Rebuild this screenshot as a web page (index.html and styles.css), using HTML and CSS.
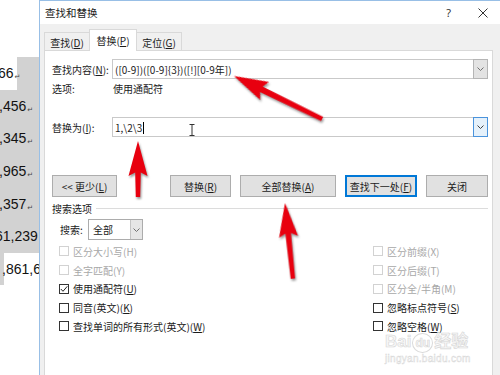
FILE: index.html
```html
<!DOCTYPE html>
<html lang="zh-CN">
<head>
  <meta charset="UTF-8">
  <title>查找和替换</title>
  <link rel="stylesheet" href="styles.css">
</head>
<body>
<div class="page">

  <!-- Word document peeking out behind the dialog -->
  <div class="sheet">
    <div class="row first"><span class="txt">66<i>↵</i></span></div>
    <div class="row gray"><span class="txt">,456<i>↵</i></span></div>
    <div class="row gray"><span class="txt">,345<i>↵</i></span></div>
    <div class="row gray"><span class="txt">,965<i>↵</i></span></div>
    <div class="row gray"><span class="txt">,357<i>↵</i></span></div>
    <div class="row gray"><span class="txt cut">61,239</span></div>
    <div class="row last"><span class="txt">,861,6</span></div>
  </div>

  <!-- Find & Replace dialog -->
  <div class="dialog">
    <div class="titlebar">
      <span class="title">查找和替换</span>
      <span class="help">?</span>
      <svg class="close" width="10" height="10" viewBox="0 0 10 10">
        <path d="M0.5,0.5 L9.5,9.5 M9.5,0.5 L0.5,9.5" stroke="#333" stroke-width="1"/>
      </svg>
    </div>

    <div class="dlg-body">
      <div class="tabs">
        <div class="tab t1">查找(<u>D</u>)</div>
        <div class="tab t2 active">替换(<u>P</u>)</div>
        <div class="tab t3">定位(<u>G</u>)</div>
      </div>

      <div class="panel">
        <div class="field">
          <label>查找内容(<u>N</u>):</label>
          <div class="combo">
            <span class="value">([0-9])([0-9]{3})([!][0-9年])</span>
            <span class="drop">
              <svg width="7" height="4" viewBox="0 0 7 4"><polyline points="0.5,0.5 3.5,3.5 6.5,0.5" fill="none" stroke="#707070"/></svg>
            </span>
          </div>
        </div>

        <div class="field opts">
          <label>选项:</label>
          <span class="opt-val">使用通配符</span>
        </div>

        <div class="field replace">
          <label>替换为(<u>I</u>):</label>
          <div class="combo">
            <span class="value">1,\2\3<span class="caret"></span></span>
            <span class="drop focus">
              <svg width="7" height="4" viewBox="0 0 7 4"><polyline points="0.5,0.5 3.5,3.5 6.5,0.5" fill="none" stroke="#404040"/></svg>
            </span>
          </div>
        </div>

        <div class="buttons">
          <div class="btn more">&lt;&lt; 更少(<u>L</u>)</div>
          <div class="btn w61">替换(<u>R</u>)</div>
          <div class="btn w96">全部替换(<u>A</u>)</div>
          <div class="btn w72 default">查找下一处(<u>F</u>)</div>
          <div class="btn w62">关闭</div>
        </div>

        <div class="group">搜索选项</div>

        <div class="search-row">
          <label>搜索:</label>
          <div class="select">
            <span class="value">全部</span>
            <span class="sel-drop">
              <svg width="7" height="4" viewBox="0 0 7 4"><polyline points="0.5,0.5 3.5,3.5 6.5,0.5" fill="none" stroke="#707070"/></svg>
            </span>
          </div>
        </div>

        <div class="checks">
          <div class="check off"><span class="box"></span>区分大小写(H)</div>
          <div class="check off"><span class="box"></span>全字匹配(Y)</div>
          <div class="check"><span class="box">
            <svg width="8" height="8" viewBox="0 0 8 8"><polyline points="0.8,4 3,6.3 7.3,1.3" fill="none" stroke="#222" stroke-width="1"/></svg>
          </span>使用通配符(<u>U</u>)</div>
          <div class="check"><span class="box"></span>同音(英文)(<u>K</u>)</div>
          <div class="check"><span class="box"></span>查找单词的所有形式(英文)(<u>W</u>)</div>

          <div class="check off"><span class="box"></span>区分前缀(X)</div>
          <div class="check off"><span class="box"></span>区分后缀(T)</div>
          <div class="check off"><span class="box"></span>区分全/半角(M)</div>
          <div class="check"><span class="box"></span>忽略标点符号(<u>S</u>)</div>
          <div class="check"><span class="box"></span>忽略空格(<u>W</u>)</div>
        </div>
      </div>
    </div>
  </div>

  <!-- watermark -->
  <div class="watermark">
    <div class="wm-logo">Bai<span class="paw">du</span>经验</div>
    <div class="wm-url">jingyan.baidu.com</div>
  </div>

  <!-- red annotation arrows + mouse cursor -->
  <svg class="arrows" width="500" height="375" viewBox="0 0 500 375">
    <g class="arrow">
      <polygon transform="translate(234,76) rotate(-64)" points="0,0 10,34 3,30.5 2.3,98 -2.3,98 -3,30.5 -10,34"/>
      <polygon transform="translate(138,141)" points="0,0 9.5,35 2.8,31.5 2.2,56 -2.2,56 -2.8,31.5 -9.5,35"/>
      <polygon transform="translate(285,203) rotate(-6)" points="0,0 9.5,34 2.8,30.5 2.2,76 -2.2,76 -2.8,30.5 -9.5,34"/>
    </g>
    <path class="ibeam" d="M189.5,124.5 H194.5 M189.5,135.5 H194.5 M192,125 V135"/>
  </svg>

</div>
</body>
</html>
```

FILE: styles.css
```css
* {
  box-sizing: border-box;
}
body {
  margin: 0;
  background: #fff;
  font-family: "Noto Sans CJK SC", "Noto Sans", sans-serif;
  font-size: 10px;
  color: #1b1b1b;
}
u {
  text-decoration: underline;
  text-underline-offset: 1px;
}
.page {
  position: relative;
  width: 500px;
  height: 375px;
  overflow: hidden;
  display: flex;
}

/* document behind */
.sheet {
  width: 39px;
  flex: none;
  padding-top: 57px;
  font-family: "Liberation Sans", Arial, sans-serif;
  font-size: 14px;
  color: #111;
}
.sheet .row {
  height: 32.6px;
  display: flex;
  align-items: center;
  white-space: nowrap;
  overflow: hidden;
}
.sheet .row.first {
  background: linear-gradient(90deg, #fff 17px, #d2d2d2 17px);
}
.sheet .row.gray {
  background: #d2d2d2;
}
.sheet .row.last {
  background: linear-gradient(90deg, #d2d2d2 4px, #fff 4px);
}
.sheet .txt {
  margin-left: -1px;
}
.sheet .row.first .txt {
  margin-left: -2px;
}
.sheet .txt.cut {
  margin-left: -5px;
}
.sheet .row.last .txt {
  margin-left: 2px;
}
.sheet i {
  font-style: normal;
  font-family: "DejaVu Sans", sans-serif;
  font-size: 7px;
  color: #444;
  margin-left: 1px;
  vertical-align: -1px;
}

/* dialog */
.dialog {
  flex: 1;
  display: flex;
  flex-direction: column;
  border-left: 1px solid #98bfe6;
  border-top: 1px solid #98bfe6;
  background: #f0f0f0;
}
.titlebar {
  height: 23px;
  flex: none;
  background: #fff;
  display: flex;
  align-items: center;
  padding: 0 12px 0 5px;
}
.title {
  flex: 1;
  font-size: 10.5px;
}
.help {
  font-family: "Noto Sans", sans-serif;
  font-size: 11px;
  color: #333;
  margin-right: 27px;
}
.dlg-body {
  flex: 1;
  display: flex;
  flex-direction: column;
  padding: 5px 7px 0 4px;
}
.tabs {
  height: 21px;
  display: flex;
  align-items: flex-end;
}
.tab {
  height: 18px;
  border: 1px solid #d9d9d9;
  border-bottom: none;
  background: #f0f0f0;
  display: flex;
  align-items: center;
  justify-content: center;
  padding-top: 1px;
}
.tab.t1 { width: 46px; }
.tab.t2 { width: 48px; margin-left: -1px; }
.tab.t3 { width: 46px; margin-left: -1px; }
.tab.active {
  height: 22px;
  margin-bottom: -1px;
  background: #fff;
  position: relative;
  z-index: 1;
  padding-top: 0;
}
.panel {
  flex: 1;
  background: #fff;
  border: 1px solid #d9d9d9;
  border-bottom: none;
  padding: 8px 4px 0 7px;
}

.field {
  display: flex;
  align-items: center;
  height: 20px;
}
.field label {
  width: 60px;
  flex: none;
}
.combo {
  flex: 1;
  height: 20px;
  border: 1px solid #c9c9c9;
  display: flex;
  align-items: center;
  padding-left: 2px;
}
.combo .value {
  flex: 1;
  white-space: nowrap;
  font-size: 10px;
}
.caret {
  display: inline-block;
  width: 1px;
  height: 12px;
  background: #000;
  margin-left: 1px;
  vertical-align: -2px;
}
.drop {
  width: 15px;
  align-self: stretch;
  margin: -1px -1px -1px 0;
  border: 1px solid #b5b5b5;
  background: #e3e3e3;
  display: flex;
  align-items: center;
  justify-content: center;
}
.drop.focus {
  border-color: #4a93dc;
  background: #e5f1fb;
}
.field.opts {
  height: 16px;
  margin-top: 1px;
}
.opt-val {
  margin-left: 1px;
}
.field.replace {
  margin-top: 21px;
}

.buttons {
  display: flex;
  gap: 9px;
  height: 22px;
  margin-top: 38px;
}
.btn {
  border: 1px solid #adadad;
  background: #e1e1e1;
  display: flex;
  align-items: center;
  justify-content: center;
  white-space: nowrap;
}
.btn.more { width: 65px; margin-right: auto; }
.btn.w61 { width: 61px; }
.btn.w96 { width: 96px; }
.btn.w72 { width: 72px; }
.btn.w62 { width: 62px; }
.btn.default {
  border: 1px solid #0078d7;
  box-shadow: inset 0 0 0 1px #0078d7;
}

.group {
  display: flex;
  align-items: center;
  height: 14px;
  margin-top: 4px;
}
.group::after {
  content: "";
  flex: 1;
  height: 1px;
  background: #dcdcdc;
  margin-left: 4px;
}

.search-row {
  display: flex;
  align-items: center;
  height: 21px;
  margin-top: 4px;
  padding-left: 8px;
}
.search-row label {
  width: 28px;
}
.select {
  width: 55px;
  height: 21px;
  border: 1px solid #acacac;
  display: flex;
  align-items: center;
}
.select .value {
  flex: 1;
  padding-left: 4px;
}
.sel-drop {
  width: 12px;
  align-self: stretch;
  background: #e6e6e6;
  border-left: 1px solid #c4c4c4;
  display: flex;
  align-items: center;
  justify-content: center;
}

.checks {
  display: grid;
  grid-template-columns: 314px 1fr;
  grid-template-rows: repeat(5, 18.75px);
  grid-auto-flow: column;
  margin-top: 2px;
  padding-left: 7px;
}
.check {
  display: flex;
  align-items: center;
  white-space: nowrap;
}
.box {
  width: 10px;
  height: 10px;
  border: 1px solid #333;
  background: #fff;
  margin-right: 4px;
  display: flex;
  align-items: center;
  justify-content: center;
}
.check.off {
  color: #a8a8a8;
}
.check.off .box {
  border-color: #d2d2d2;
}

/* overlays */
.watermark {
  position: absolute;
  left: 385px;
  top: 333px;
  color: #f7f7f7;
  -webkit-text-stroke: 0.6px #d6d6d6;
  font-family: "Liberation Sans", "Noto Sans CJK SC", sans-serif;
}
.wm-logo {
  font-size: 17px;
  font-weight: bold;
  line-height: 18px;
  white-space: nowrap;
}
.paw {
  display: inline-block;
  font-size: 12px;
  border: 1px solid #dadada;
  border-radius: 50%;
  padding: 0 2px;
  margin: 0 1px;
}
.wm-url {
  font-size: 10px;
  line-height: 12px;
  -webkit-text-stroke: 0.4px #d6d6d6;
  letter-spacing: 0.3px;
}
.arrows {
  position: absolute;
  left: 0;
  top: 0;
  pointer-events: none;
}
.arrow {
  fill: #e8000f;
  filter: drop-shadow(1.5px 2px 1.2px rgba(0, 0, 0, 0.4));
}
.ibeam {
  stroke: #333;
  stroke-width: 1;
  fill: none;
}
```
